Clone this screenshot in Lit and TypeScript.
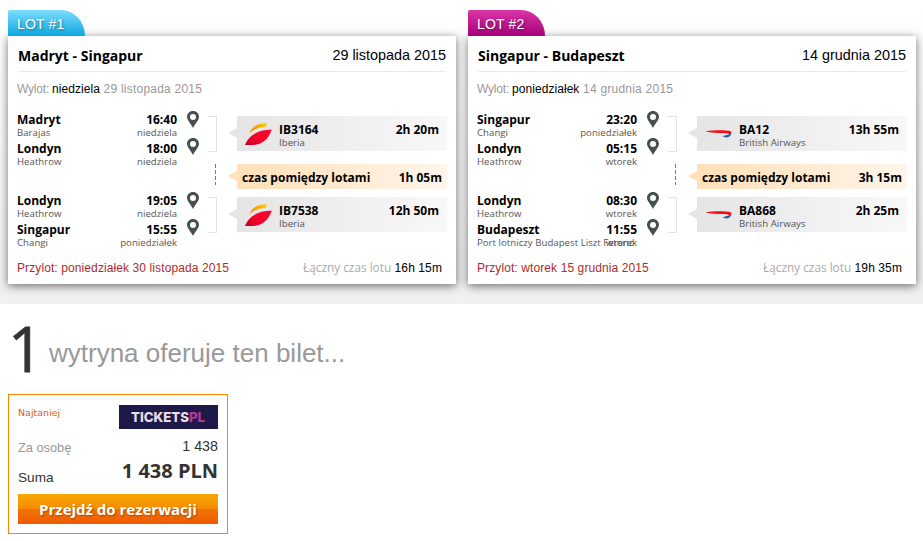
import { LitElement, html, css, svg, type TemplateResult } from 'lit';
import { customElement, property } from 'lit/decorators.js';

interface Stop {
  city: string;
  airport: string;
  time: string;
  day: string;
}

interface Segment {
  from: Stop;
  to: Stop;
  flight: string;
  airline: 'Iberia' | 'British Airways';
  duration: string;
}

interface Flight {
  title: string;
  date: string;
  departureDay: string;
  arrival: string;
  segments: Segment[];
  layover: string;
  total: string;
}

const FLIGHTS: Flight[] = [
  {
    title: 'Madryt - Singapur',
    date: '29 listopada 2015',
    departureDay: 'niedziela',
    arrival: 'poniedziałek 30 listopada 2015',
    segments: [
      {
        from: { city: 'Madryt', airport: 'Barajas', time: '16:40', day: 'niedziela' },
        to: { city: 'Londyn', airport: 'Heathrow', time: '18:00', day: 'niedziela' },
        flight: 'IB3164',
        airline: 'Iberia',
        duration: '2h 20m',
      },
      {
        from: { city: 'Londyn', airport: 'Heathrow', time: '19:05', day: 'niedziela' },
        to: { city: 'Singapur', airport: 'Changi', time: '15:55', day: 'poniedziałek' },
        flight: 'IB7538',
        airline: 'Iberia',
        duration: '12h 50m',
      },
    ],
    layover: '1h 05m',
    total: '16h 15m',
  },
  {
    title: 'Singapur - Budapeszt',
    date: '14 grudnia 2015',
    departureDay: 'poniedziałek',
    arrival: 'wtorek 15 grudnia 2015',
    segments: [
      {
        from: { city: 'Singapur', airport: 'Changi', time: '23:20', day: 'poniedziałek' },
        to: { city: 'Londyn', airport: 'Heathrow', time: '05:15', day: 'wtorek' },
        flight: 'BA12',
        airline: 'British Airways',
        duration: '13h 55m',
      },
      {
        from: { city: 'Londyn', airport: 'Heathrow', time: '08:30', day: 'wtorek' },
        to: { city: 'Budapeszt', airport: 'Port lotniczy Budapest Liszt Ferenc', time: '11:55', day: 'wtorek' },
        flight: 'BA868',
        airline: 'British Airways',
        duration: '2h 25m',
      },
    ],
    layover: '3h 15m',
    total: '19h 35m',
  },
];

const pinIcon = html`
  <svg class="pin" viewBox="0 0 12 17">
    <path
      fill="#474f51"
      fill-rule="evenodd"
      d="M6 0C2.6 0 0 2.6 0 5.8C0 9.3 3.6 12.2 6 17C8.4 12.2 12 9.3 12 5.8C12 2.6 9.4 0 6 0ZM6 2.9A3 3 0 1 1 6 8.9A3 3 0 1 1 6 2.9Z"
    />
  </svg>
`;

const LOGOS = {
  'Iberia': svg`
    <defs>
      <linearGradient id="red" x1="0" y1="1" x2="1" y2="0">
        <stop offset="0" stop-color="#b80025" />
        <stop offset="0.4" stop-color="#f50029" />
        <stop offset="1" stop-color="#ff0a2c" />
      </linearGradient>
      <linearGradient id="gold" x1="0" y1="0" x2="1" y2="0">
        <stop offset="0" stop-color="#f28a00" />
        <stop offset="1" stop-color="#ffd000" />
      </linearGradient>
    </defs>
    <path fill="url(#gold)" d="M4.3 11.5C7 5 12 1 22.3 1.3C21.8 2.8 21 4.1 19.8 5C13.5 5.1 8.5 7.3 4.3 11.5Z" />
    <path fill="url(#red)" d="M0 23C3.6 14 11.5 8 26.7 7.6C24.8 14 20 20.3 14 22C10 23.3 5 23.1 0 23Z" />
  `,
  'British Airways': svg`
    <path fill="#f40d12" d="M.5 9.4C6 8.5 13 8.2 20 8.4C24 8.5 26.8 9 26.5 10.6C26.3 11.8 25.2 12.7 24 12.9C24.3 11.8 22.5 11.3 19.5 11.1C13 10.8 6 10.7 .5 9.4Z" />
    <path fill="#1f5fa6" d="M17.3 14.2C20.5 13.5 23.3 12.7 26.3 11.8C25.7 14 23.5 15.7 20.8 15.6C20.2 15.2 19.2 14.6 17.3 14.2Z" />
  `,
};

/**
 * Single flight card: coloured tab, stops with times and the airline bars.
 */
@customElement('flight-card')
export class FlightCard extends LitElement {
  @property({ attribute: false })
  flight!: Flight;

  @property({ type: Number, reflect: true })
  number = 1;

  private _renderStop(stop: Stop): TemplateResult {
    return html`
      <div class="stop">
        <div class="line city"><span>${stop.city}</span><span>${stop.time}</span></div>
        <div class="line airport"><span>${stop.airport}</span><span class="day">${stop.day}</span></div>
      </div>
    `;
  }

  private _renderSegment(segment: Segment): TemplateResult {
    return html`
      <div class="segment">
        <div class="stops">
          ${this._renderStop(segment.from)}
          ${this._renderStop(segment.to)}
        </div>
        <div class="pins">${pinIcon}${pinIcon}</div>
        <div class="bracket"></div>
        <div class="bar">
          <svg class="logo" viewBox="0 0 27 24">${LOGOS[segment.airline]}</svg>
          <div class="carrier">
            <div class="code">${segment.flight}</div>
            <div class="airline">${segment.airline}</div>
          </div>
          <div class="duration">${segment.duration}</div>
        </div>
      </div>
    `;
  }

  override render() {
    const { title, date, departureDay, arrival, segments, layover, total } = this.flight;
    return html`
      <div class="tab">LOT #${this.number}</div>
      <section class="card">
        <header>
          <h2>${title}</h2>
          <span>${date}</span>
        </header>
        <p class="departure"><i>Wylot:</i> <b>${departureDay}</b> ${date}</p>
        ${this._renderSegment(segments[0])}
        <div class="layover">
          <svg class="dashes" viewBox="0 0 1 21"><path stroke="#d2601a" stroke-dasharray="4 2" d="M.5 0V21" /></svg>
          <div class="bar wait">
            <span>czas pomiędzy lotami</span>
            <span>${layover}</span>
          </div>
        </div>
        ${this._renderSegment(segments[1])}
        <footer>
          <span class="arrival">Przylot: ${arrival}</span>
          <span class="total"><i>Łączny czas lotu</i> ${total}</span>
        </footer>
      </section>
    `;
  }

  static override styles = css`
    :host {
      display: block;
      width: 448px;
    }

    .tab {
      position: relative;
      z-index: 1;
      box-sizing: border-box;
      width: 77px;
      height: 26px;
      padding-left: 9px;
      border-radius: 2px 24px 0 0 / 2px 26px 0 0;
      background: linear-gradient(#7fdcff, #0aa8e0);
      color: #fff;
      font-size: 14px;
      letter-spacing: 0.15px;
      line-height: 29px;
      text-shadow: 1px 1px 3px rgba(0, 0, 0, 0.4);
    }

    :host([number='2']) .tab {
      background: linear-gradient(#dc35a6, #a5007a);
    }

    .card {
      box-sizing: border-box;
      height: 248px;
      padding: 0 10px 0 9px;
      background: #fff;
      box-shadow: 0 2px 9px rgba(0, 0, 0, 0.55);
    }

    header {
      display: flex;
      justify-content: space-between;
      height: 35px;
      margin-left: 1px;
      border-bottom: 1px solid #e9e9e9;
      font-size: 14.4px;
      line-height: 39px;
    }

    h2 {
      margin: 0;
      font: bold 14px/40px 'Open Sans', sans-serif;
    }

    .departure {
      height: 41px;
      margin: 0;
      color: #999;
      font-size: 12px;
      letter-spacing: 0.23px;
      line-height: 34px;
    }

    .departure i {
      font-style: normal;
      letter-spacing: -0.2px;
    }

    .departure b {
      margin-left: -0.5px;
      color: #000;
      font-weight: normal;
      letter-spacing: 0.05px;
    }

    .segment {
      display: flex;
      height: 58px;
      font-family: 'Open Sans', sans-serif;
    }

    .stops {
      width: 160px;
    }

    .stop {
      height: 29px;
    }

    .line {
      display: flex;
      justify-content: space-between;
      white-space: nowrap;
    }

    .city {
      font-size: 12px;
      font-weight: bold;
      line-height: 14px;
    }

    .airport {
      color: #555;
      font-size: 9.6px;
      letter-spacing: 0.04px;
      line-height: 12px;
    }

    .airport span {
      width: 0;
    }

    .airport .day {
      display: flex;
      justify-content: flex-end;
    }

    .pins {
      display: flex;
      flex-direction: column;
      gap: 10px;
      margin: -2px 0 0 10px;
    }

    .pin {
      display: block;
      width: 12px;
      height: 17px;
    }

    .bracket {
      box-sizing: border-box;
      width: 9px;
      height: 36px;
      margin: 3px 20px 0 9px;
      border: 1px solid #e3e3e3;
      border-left: 0;
    }

    .bar {
      position: relative;
      box-sizing: border-box;
      display: flex;
      width: 210px;
      height: 35px;
      margin: 3px -1px 0 0;
      padding: 0 8px;
      flex: none;
      background: linear-gradient(90deg, #e5e5e5, #f8f8f8);
      font-family: 'Open Sans', sans-serif;
    }

    .bar::before {
      content: '';
      position: absolute;
      top: 12px;
      left: -9px;
      border: solid transparent;
      border-width: 5px 9px 5px 0;
      border-right-color: #e5e5e5;
    }

    .logo {
      width: 27px;
      height: 24px;
      margin-top: 6px;
    }

    .carrier {
      flex: 1;
      margin: 6px 0 0 7px;
    }

    .code,
    .duration {
      font-size: 12px;
      font-weight: bold;
      line-height: 15px;
    }

    .duration {
      margin-top: 6px;
    }

    .airline {
      color: #555;
      font-size: 9.7px;
      line-height: 12px;
    }

    .layover {
      display: flex;
      height: 23px;
      padding-left: 198px;
    }

    .dashes {
      width: 1px;
      height: 21px;
      margin: -7px 21px 0 0;
    }

    .wait {
      justify-content: space-between;
      height: 25px;
      margin-top: -7px;
      padding: 0 5px;
      background: linear-gradient(90deg, #ffe0b8, #fff5ea);
      font-size: 12px;
      font-weight: bold;
      line-height: 27px;
    }

    .wait::before {
      top: 7px;
      border-right-color: #ffe0b8;
    }

    footer {
      display: flex;
      justify-content: space-between;
      padding-right: 4px;
      font-size: 12px;
      line-height: 32px;
    }

    .arrival {
      color: #b22a2a;
      letter-spacing: 0.1px;
    }

    .total {
      letter-spacing: 0.1px;
    }

    .total i {
      color: #aaa;
      font: 11.8px 'Open Sans', sans-serif;
      letter-spacing: 0;
    }
  `;
}

@customElement('app-root')
export class AppRoot extends LitElement {
  override render() {
    return html`
      <main>
        ${FLIGHTS.map((flight, i) => html`<flight-card .flight=${flight} .number=${i + 1}></flight-card>`)}
      </main>
      <h1><strong>1</strong> <span>wytryna oferuje ten bilet...</span></h1>
      <section class="offer">
        <div class="row top">
          <span class="cheapest">Najtaniej</span>
          <svg class="brand" viewBox="0 0 99 24">
            <rect width="99" height="24" fill="#1d1a49" />
            <text x="12" y="17" textLength="74" lengthAdjust="spacingAndGlyphs">TICKETS<tspan fill="#b5379b">PL</tspan></text>
          </svg>
        </div>
        <div class="row person"><span>Za osobę</span><b>1 438</b></div>
        <div class="row sum"><span>Suma</span><b>1 438 PLN</b></div>
        <button>Przejdź do rezerwacji</button>
      </section>
    `;
  }

  static override styles = css`
    :host {
      display: block;
      height: 541px;
      overflow: hidden;
      background: #fff;
      color: #000;
      font-family: 'Liberation Sans', Arial, sans-serif;
    }

    main {
      box-sizing: border-box;
      display: flex;
      gap: 12px;
      height: 304px;
      padding: 10px 8px 0;
      overflow: hidden;
      background: linear-gradient(#fff, #f0f0f0);
    }

    h1 {
      display: flex;
      height: 90px;
      margin: 0 0 0 8px;
      color: #999;
      font-size: 26px;
      font-weight: normal;
      line-height: 98px;
    }

    h1 strong {
      width: 41px;
      color: #333;
      font: 500 62px/88px 'Open Sans', sans-serif;
      -webkit-text-stroke: 0.8px #333;
    }

    .offer {
      box-sizing: border-box;
      width: 220px;
      height: 140px;
      margin-left: 8px;
      padding: 10px 9px 9px;
      border: 1px solid #ff8500;
    }

    .row {
      display: flex;
      justify-content: space-between;
      color: #333;
    }

    .top {
      height: 24px;
    }

    .cheapest {
      color: #e8590c;
      font: 9.5px/16px 'DejaVu Sans', sans-serif;
    }

    .brand {
      width: 99px;
      height: 24px;
    }

    .brand text {
      fill: #e9dbea;
      font: 800 13.5px Inter, sans-serif;
    }

    .person {
      height: 28px;
      font-size: 14.3px;
      line-height: 34px;
    }

    .person span {
      color: #999;
      font-size: 12.8px;
      line-height: 37px;
    }

    .person b {
      font-weight: normal;
    }

    .sum {
      height: 37px;
      font-size: 13.6px;
      line-height: 42px;
    }

    .sum b {
      font: bold 20px/28px 'Open Sans', sans-serif;
    }

    button {
      display: block;
      width: 200px;
      height: 30px;
      padding: 0;
      border: 0;
      background: linear-gradient(#f9a800, #f58a00 50%, #f27500 50%, #ee5a00);
      color: #fff;
      font: bold 15px/30px 'Open Sans', sans-serif;
      text-shadow: 1px 1px 2px rgba(0, 0, 0, 0.3);
    }
  `;
}
